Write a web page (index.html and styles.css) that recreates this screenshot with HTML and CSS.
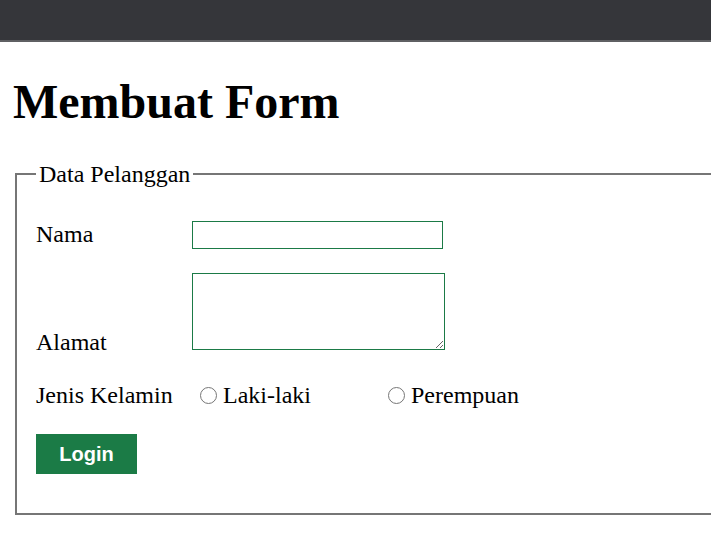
FILE: index.html
```html
<!DOCTYPE html>
<html lang="id">
<head>
<meta charset="utf-8">
<title>Membuat Form</title>
<link rel="stylesheet" href="styles.css">
</head>
<body>
<header class="topbar"></header>
<main class="content">
  <h1 class="title">Membuat Form</h1>
  <form class="form">
    <fieldset class="group">
      <legend class="group-legend">Data Pelanggan</legend>
      <div class="row row-nama">
        <label class="row-label" for="nama">Nama</label>
        <input class="text-input" id="nama" type="text">
      </div>
      <div class="row row-alamat">
        <label class="row-label" for="alamat">Alamat</label>
        <textarea class="text-area" id="alamat"></textarea>
      </div>
      <div class="row row-jk">
        <span class="row-label">Jenis Kelamin</span>
        <label class="radio-item radio-first"><input class="radio" type="radio" name="jk"><span class="radio-text">Laki-laki</span></label>
        <label class="radio-item"><input class="radio" type="radio" name="jk"><span class="radio-text">Perempuan</span></label>
      </div>
      <button class="btn" type="button">Login</button>
    </fieldset>
  </form>
</main>
</body>
</html>
```
FILE: styles.css
```css
html, body {
  margin: 0;
  padding: 0;
  overflow: hidden;
  background: #ffffff;
}

body {
  font-family: "Liberation Serif", "Times New Roman", serif;
  color: #000000;
}

.topbar {
  height: 40px;
  background: #35363a;
  border-bottom: 2px solid #5f6063;
}

.content {
  padding: 0 13px;
}

.title {
  margin: 32px 0 30px;
  font-size: 48px;
  line-height: 56px;
  font-weight: bold;
}

.form {
  margin: 0;
}

.group {
  min-width: 0;
  margin: 0 -13px 0 2px;
  padding: 0 0 39px 19px;
  border: 2px solid #767676;
  border-right: none;
  font-size: 24px;
  line-height: 28px;
}

.group-legend {
  padding: 0 3px;
  font-size: 24px;
  line-height: 28px;
}

.row {
  display: flex;
}

.row-label {
  width: 156px;
  flex: none;
  line-height: 28px;
}

.row-nama {
  margin-top: 32px;
  align-items: flex-start;
}

.text-input {
  box-sizing: border-box;
  width: 251px;
  height: 28px;
  margin: 1px 0 0;
  padding: 0 2px;
  border: 1px solid #1b7a46;
  font-size: 16px;
  outline: none;
}

.row-alamat {
  margin-top: 24px;
  align-items: flex-end;
}

.text-area {
  box-sizing: border-box;
  width: 253px;
  height: 77px;
  margin: 0 0 6px;
  padding: 2px;
  border: 1px solid #1b7a46;
  font-size: 16px;
  outline: none;
}

.row-jk {
  margin-top: 25px;
  align-items: flex-start;
}

.radio-item {
  display: flex;
  align-items: flex-start;
}

.radio-first {
  width: 196px;
}

.radio {
  appearance: none;
  -webkit-appearance: none;
  box-sizing: border-box;
  width: 17px;
  height: 17px;
  margin: 6px 6px 0 8px;
  border: 1.5px solid #767676;
  border-radius: 50%;
  background: #ffffff;
  flex: none;
}

.radio-item + .radio-item .radio {
  margin-left: 0;
}

.radio-text {
  line-height: 28px;
}

.btn {
  display: block;
  width: 101px;
  height: 40px;
  margin-top: 25px;
  padding: 0;
  border: none;
  background: #1b7b46;
  color: #ffffff;
  font-family: "Liberation Sans", Arial, sans-serif;
  font-size: 20px;
  font-weight: bold;
  line-height: 23px;
}
```
